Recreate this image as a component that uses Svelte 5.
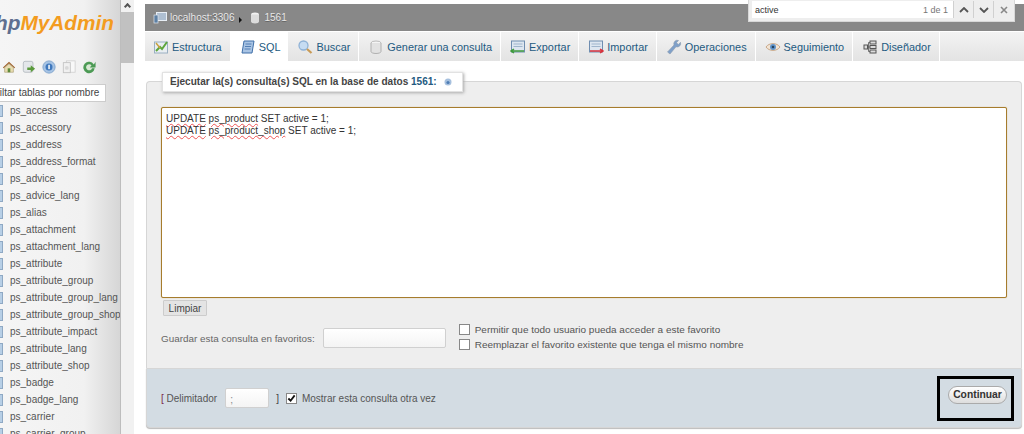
<script>
  const tables = ['ps_access','ps_accessory','ps_address','ps_address_format','ps_advice','ps_advice_lang','ps_alias','ps_attachment','ps_attachment_lang','ps_attribute','ps_attribute_group','ps_attribute_group_lang','ps_attribute_group_shop','ps_attribute_impact','ps_attribute_lang','ps_attribute_shop','ps_badge','ps_badge_lang','ps_carrier','ps_carrier_group'];
  const tabs = [
    {n:'Estructura',k:'struct'},{n:'SQL',k:'sql',active:true},{n:'Buscar',k:'search'},{n:'Generar una consulta',k:'query'},
    {n:'Exportar',k:'export'},{n:'Importar',k:'import'},{n:'Operaciones',k:'ops'},{n:'Seguimiento',k:'track'},{n:'Diseñador',k:'design'}
  ];
</script>

<div class="page">
  <aside class="nav">
    <div class="logo"><i>hp</i><b>MyAdmin</b></div>
    <div class="navicons">
      <svg width="14" height="14" viewBox="0 0 16 16"><path d="M1 8.500 8 2l7 6.500-1 1-6-5.500-6 5.500z" fill="#a0622d"/><path d="M3 8.500 8 4.500l5 4V14H3z" fill="#e8dcb0" stroke="#9a8a60" stroke-width=".6"/><path d="M6.500 9.500h3V14h-3z" fill="#5f8a3a"/></svg>
      <svg width="14" height="14" viewBox="0 0 16 16"><rect x="1.500" y="1.500" width="11" height="12.500" rx="2" fill="#e4e7ea" stroke="#b5bac0"/><path d="M6 8.500h4V6l5 4-5 4v-2.500H6z" fill="#5a9a3c"/></svg>
      <svg width="14" height="14" viewBox="0 0 16 16"><circle cx="8" cy="8" r="7" fill="#a6c3e4" stroke="#7ea2cc"/><circle cx="8" cy="8" r="4" fill="#3f78bd"/><rect x="7.200" y="5.500" width="1.700" height="5" fill="#fff"/></svg>
      <svg width="14" height="14" viewBox="0 0 16 16"><rect x="5" y="1" width="10" height="13" fill="#f8f8f8" stroke="#d2d2d2"/><rect x="1.500" y="3" width="8" height="11.500" fill="#f0f0f0" stroke="#c2c2c2"/><circle cx="5.500" cy="9" r="2.200" fill="#d8d8d8"/></svg>
      <svg width="14" height="14" viewBox="0 0 16 16"><circle cx="8" cy="8" r="6.500" fill="#d9e8d4"/><path d="M13.500 5A6.500 6.500 0 1 0 14.500 9.500h-3a3.500 3.500 0 1 1-.6-3.400L9 8.500h6.500V2z" fill="#4c9a55"/></svg>
    </div>
    <div class="filter">filtar tablas por nombre</div>
    <ul class="tables">
      {#each tables as t}
        <li><span class="ticon"></span>{t}</li>
      {/each}
    </ul>
  </aside>

  <div class="scrollbar"><span class="arrow"></span><span class="thumb"></span></div>

  <main class="main">
    <div class="crumbs">
      <svg width="14" height="14" viewBox="0 0 14 14"><rect x="3.500" y="1.500" width="10" height="8" fill="#aebfd2" stroke="#e8eef5"/><rect x="1" y="4" width="4" height="8" fill="#5d80a4" stroke="#dfe6ee" stroke-width=".7"/></svg>
      <span class="crumb">localhost:3306</span>
      <span class="sep"></span>
      <svg class="dbicon" width="10" height="12" viewBox="0 0 10 12"><ellipse cx="5" cy="2.500" rx="4" ry="2" fill="#f2f2f2"/><path d="M1 2.500v7c0 1.100 1.800 2 4 2s4-.9 4-2v-7z" fill="#dcdcdc"/></svg>
      <span class="crumb">1561</span>
    </div>

    <nav class="tabs">
      {#each tabs as t}
        <div class="tab" class:active={t.active}>
          <svg width="16" height="16" viewBox="0 0 16 16">
            {#if t.k === 'struct'}
              <rect x="1.500" y="3" width="13" height="11" fill="#e9eef2" stroke="#9ab0c2"/><path d="M3 12 7 8l2 2 5-7" fill="none" stroke="#5da63c" stroke-width="2"/><path d="M3 4l4 5" stroke="#c9a03c" stroke-width="1.500"/>
            {:else if t.k === 'sql'}
              <path d="M4 2h10l-2 12H2z" fill="#a9c4e4" stroke="#3f6fa8"/><path d="M5.500 5h6M5 7.500h6M4.500 10h6" stroke="#3f6fa8" stroke-width=".8"/>
            {:else if t.k === 'search'}
              <circle cx="6.500" cy="6.500" r="4.500" fill="#c6dcf2" stroke="#8fb2d6" stroke-width="1.300"/><path d="m10 10 4.500 4" stroke="#c89a55" stroke-width="2.200"/>
            {:else if t.k === 'query'}
              <ellipse cx="8" cy="4" rx="5" ry="2" fill="#f4f4f4" stroke="#bbb"/><path d="M3 4v8.500c0 1.100 2.200 2 5 2s5-.9 5-2V4" fill="#e2e2e2" stroke="#b0b0b0"/>
            {:else if t.k === 'export'}
              <rect x="1.500" y="2" width="13" height="11" fill="#dde6f0" stroke="#6f8db0"/><path d="M3.500 5h9M3.500 7.500h9" stroke="#9fb5cc"/><path d="M1 12h13M4 10l-3 2 3 2" fill="none" stroke="#3f9a3c" stroke-width="1.500"/>
            {:else if t.k === 'import'}
              <rect x="1.500" y="2" width="13" height="11" fill="#dde6f0" stroke="#6f8db0"/><path d="M3.500 5h9M3.500 7.500h9" stroke="#9fb5cc"/><path d="M2 12h13M12 10l3 2-3 2" fill="none" stroke="#d8323c" stroke-width="1.500"/>
            {:else if t.k === 'ops'}
              <path d="m1.500 13 6.500-7a3.500 3.500 0 0 1 4.500-4.500l-2 2.200 1.800 1.800 2.200-2.200a3.500 3.500 0 0 1-4.500 4.500L4 15z" fill="#7fa0c9" stroke="#8b9aac" stroke-width=".6"/>
            {:else if t.k === 'track'}
              <path d="M1 8c3-4.500 11-4.500 14 0-3 4.500-11 4.500-14 0z" fill="#f2e4d4" stroke="#c9a888"/><circle cx="8" cy="8" r="3" fill="#5f93c9"/><circle cx="8" cy="8" r="1.300" fill="#26425f"/>
            {:else}
              <rect x="8" y="2" width="6" height="3" fill="#dcdcdc" stroke="#555"/><rect x="8" y="6.500" width="6" height="3" fill="#dcdcdc" stroke="#555"/><rect x="8" y="11" width="6" height="3" fill="#dcdcdc" stroke="#555"/><rect x="2" y="6" width="3.500" height="4" fill="#dcdcdc" stroke="#555"/><path d="M5.500 8H8M6.500 8V3.500H8M6.500 8v4.500H8" fill="none" stroke="#555" stroke-width=".8"/>
            {/if}
          </svg>
          {t.n}
        </div>
      {/each}
    </nav>

    <section class="panel">
      <div class="fieldset">
        <div class="legend">Ejecutar la(s) consulta(s) SQL en la base de datos <span class="db">1561:</span>
          <svg width="8" height="8" viewBox="0 0 8 8"><circle cx="4" cy="4" r="3.500" fill="#a6c0de"/><circle cx="4" cy="4.500" r="1.600" fill="#4f7db5"/></svg>
        </div>
        <div class="editor">
          <div><span class="sp">UPDATE</span> <span class="sp">ps_product</span> SET active = 1;</div>
          <div><span class="sp">UPDATE</span> <span class="sp">ps_product_shop</span> SET active = 1;</div>
        </div>
        <button class="clear">Limpiar</button>
        <div class="save">
          <span class="savelabel">Guardar esta consulta en favoritos:</span>
          <span class="input fav"></span>
          <div class="opts">
            <label><span class="cb"></span>Permitir que todo usuario pueda acceder a este favorito</label>
            <label><span class="cb"></span>Reemplazar el favorito existente que tenga el mismo nombre</label>
          </div>
        </div>
      </div>
      <div class="footer">
        <span class="delim"><span class="br">[</span> Delimitador</span>
        <span class="input semi">;</span>
        <span class="close">]</span>
        <span class="cb checked"><svg width="10" height="9" viewBox="0 0 10 9"><path d="m1.500 4.500 2.500 2.500 4.500-6" fill="none" stroke="#111" stroke-width="2"/></svg></span>
        <span>Mostrar esta consulta otra vez</span>
        <div class="highlight"><button class="go">Continuar</button></div>
      </div>
    </section>
  </main>

  <div class="find">
    <div class="findinput"><span>active</span><span class="count">1 de 1</span></div>
    <span class="fbtn"><svg width="10" height="6" viewBox="0 0 10 6"><path d="m1 5 4-4 4 4" fill="none" stroke="#555" stroke-width="1.800"/></svg></span>
    <span class="fbtn"><svg width="10" height="6" viewBox="0 0 10 6"><path d="m1 1 4 4 4-4" fill="none" stroke="#555" stroke-width="1.800"/></svg></span>
    <span class="fx"><svg width="8" height="8" viewBox="0 0 8 8"><path d="m1 1 6 6M7 1 1 7" stroke="#888" stroke-width="1.600"/></svg></span>
  </div>
</div>

<style>
  :global(body) { margin: 0; background: #fff; }
  .page {
    width: 1024px; height: 434px; overflow: hidden; display: flex; position: relative;
    font-family: "Liberation Sans", Arial, sans-serif; font-size: 10px; color: #444;
  }
  .nav {
    width: 121px; flex: none; overflow: hidden; box-sizing: border-box;
    background: linear-gradient(to right, #f5f5f5, #f1f1f1 70%, #d6d6d6);
    border-right: 1px solid #bdbdbd;
  }
  .logo { height: 28px; margin: 9px 0 0 -5px; font: italic bold 20.800px/28px "Liberation Sans", sans-serif; white-space: nowrap; }
  .logo i { color: #5f6f90; }
  .logo b { color: #f39c1f; }
  .navicons { display: flex; gap: 6px; margin: 23px 0 0 2px; height: 14px; }
  .navicons svg { flex: none; }
  .filter {
    margin: 10px 0 0 -4px; width: 110px; height: 18px; box-sizing: border-box; background: #fff;
    border: 1px solid #ccc; line-height: 16px; color: #444; white-space: nowrap; overflow: hidden;
  }
  .tables { list-style: none; margin: 0; padding: 0; }
  .tables li { height: 17px; line-height: 17px; display: flex; align-items: center; white-space: nowrap; color: #555; }
  .ticon { width: 2px; height: 10px; margin-right: 7px; background: #b7cfe6; border: solid #8fa9c4; border-width: 1px 1px 1px 0; flex: none; }

  .scrollbar { width: 13px; flex: none; background: #f1f1f1; display: flex; flex-direction: column; align-items: center; }
  .arrow { height: 12px; flex: none; width: 100%; position: relative; }
  .arrow::before { content: ""; position: absolute; left: 4px; top: 4px; width: 3px; height: 3px; border: solid #555; border-width: 2px 0 0 2px; transform: rotate(45deg); }
  .thumb { width: 100%; height: 51px; background: #c1c1c1; }

  .main { flex: 1; min-width: 0; margin: 4px 0 0 11px; display: flex; flex-direction: column; }
  .crumbs {
    height: 27px; flex: none; background: #888; display: flex; align-items: center; padding-left: 8px; gap: 3px;
    color: #e8e8e8; text-shadow: 0 1px 0 #666;
  }
  .sep { width: 0; height: 0; border-left: 3px solid #111; border-top: 3px solid transparent; border-bottom: 3px solid transparent; margin: 4px 5px 0 1px; }
  .dbicon { margin-right: 2px; }
  .tabs { height: 29px; flex: none; margin-top: 1px; background: linear-gradient(#f3f3f3, #e3e3e3); display: flex; }
  .tab {
    display: flex; align-items: center; gap: 3px; padding: 0 8px 0 9px; height: 29px; box-sizing: border-box; white-space: nowrap;
    font-size: 10.900px; color: #235a81; border-right: 1px solid #fff;
  }
  .tab:first-child { padding-left: 8px; }
  .tab svg { flex: none; }
  .tab.active { background: #fff; padding-right: 7px; }
  .panel { margin: 20px 2px 0 1px; }
  .fieldset {
    height: 287px; box-sizing: border-box; background: #eee; border: 1px solid #d6d6d6; border-bottom: none;
    border-radius: 4px 4px 0 0; position: relative; padding: 25px 14px 0;
  }
  .legend {
    position: absolute; left: 15px; top: -10px; height: 20px; width: 301px; box-sizing: border-box;
    background: #fff; border: 1px solid #e2e2e2; box-shadow: 1px 1px 3px #aaa; padding: 0 7px; line-height: 18px;
    font-weight: bold; font-size: 10.050px; color: #444; white-space: nowrap;
  }
  .db { color: #235a81; }
  .legend svg { margin-left: 4px; vertical-align: -1px; }
  .editor {
    height: 191px; box-sizing: border-box; background: #fff; border: 1px solid #a67c2d; border-radius: 2px; box-shadow: 0 0 1px #c9a55a;
    padding: 5px 4px 4px; line-height: 12px; color: #333;
  }
  .sp { text-decoration: underline wavy #e55; text-decoration-thickness: 1px; text-underline-offset: 1px; }
  .clear {
    display: block; margin: 2px 0 0 2px; height: 16px; width: 44px; padding: 0; font: 10px "Liberation Sans", sans-serif; color: #444;
    background: #e4e4e4; border: 1px solid #ccc; border-radius: 1px;
  }
  .save { display: flex; align-items: center; margin-top: 7px; height: 30px; color: #666; font-size: 9.900px; }
  .savelabel { margin-right: 8px; }
  .input { display: block; box-sizing: border-box; background: linear-gradient(#fff, #f4f4f4); border: 1px solid #d0d0d0; border-radius: 2px; }
  .fav { width: 123px; height: 20px; margin-right: 13px; }
  .opts { display: flex; flex-direction: column; gap: 4px; color: #555; align-self: flex-start; margin-top: 1px; font-size: 9.970px; }
  .opts label { display: flex; align-items: center; height: 11px; white-space: nowrap; }
  .cb { width: 9px; height: 9px; border: 1px solid #888; background: #fff; margin-right: 5px; flex: none; display: flex; align-items: center; justify-content: center; }
  .footer {
    height: 60px; box-sizing: border-box; background: #d3dce3; border: 1px solid #d6d6d6; border-radius: 0 0 4px 4px; box-shadow: 0 1px 1px #bbb;
    display: flex; align-items: center; padding: 0 0 0 14px; color: #555; position: relative;
  }
  .br { color: #7a2a4a; }
  .close { margin: 0 7px 0 7px; color: #444; }
  .semi { width: 44px; height: 20px; margin-left: 8px; padding-left: 4px; line-height: 22px; color: #888; }
  .checked { margin-right: 5px; }
  .highlight {
    position: absolute; right: 7px; top: 7px; width: 77px; height: 45px; box-sizing: border-box; border: 3px solid #000; padding: 0 0 8px 4px;
    display: flex; align-items: center; justify-content: center;
  }
  .go {
    height: 18px; width: 59px; padding: 0; border: 1px solid #aaa; border-radius: 9px; background: linear-gradient(#fff, #ddd);
    font: bold 10.300px "Liberation Sans", sans-serif; color: #333;
  }
  .find {
    position: absolute; left: 748px; top: 0; width: 267px; height: 22px; box-sizing: border-box; background: #eee; border: 1px solid #d8d8d8; border-top: none;
    display: flex; align-items: center; padding: 0 0 2px 3px; font-size: 9px;
  }
  .findinput { flex: 1; display: flex; justify-content: space-between; align-items: center; height: 17px; background: #fff; padding: 0 5px 0 3px; color: #333; }
  .count { color: #777; }
  .fbtn { width: 20px; height: 17px; flex: none; display: flex; align-items: center; justify-content: center; border-left: 1px solid #d0d0d0; box-sizing: border-box; }
  .fx { width: 21px; flex: none; display: flex; justify-content: center; height: 17px; align-items: center; border-left: 1px solid #d0d0d0; box-sizing: border-box; }
</style>
